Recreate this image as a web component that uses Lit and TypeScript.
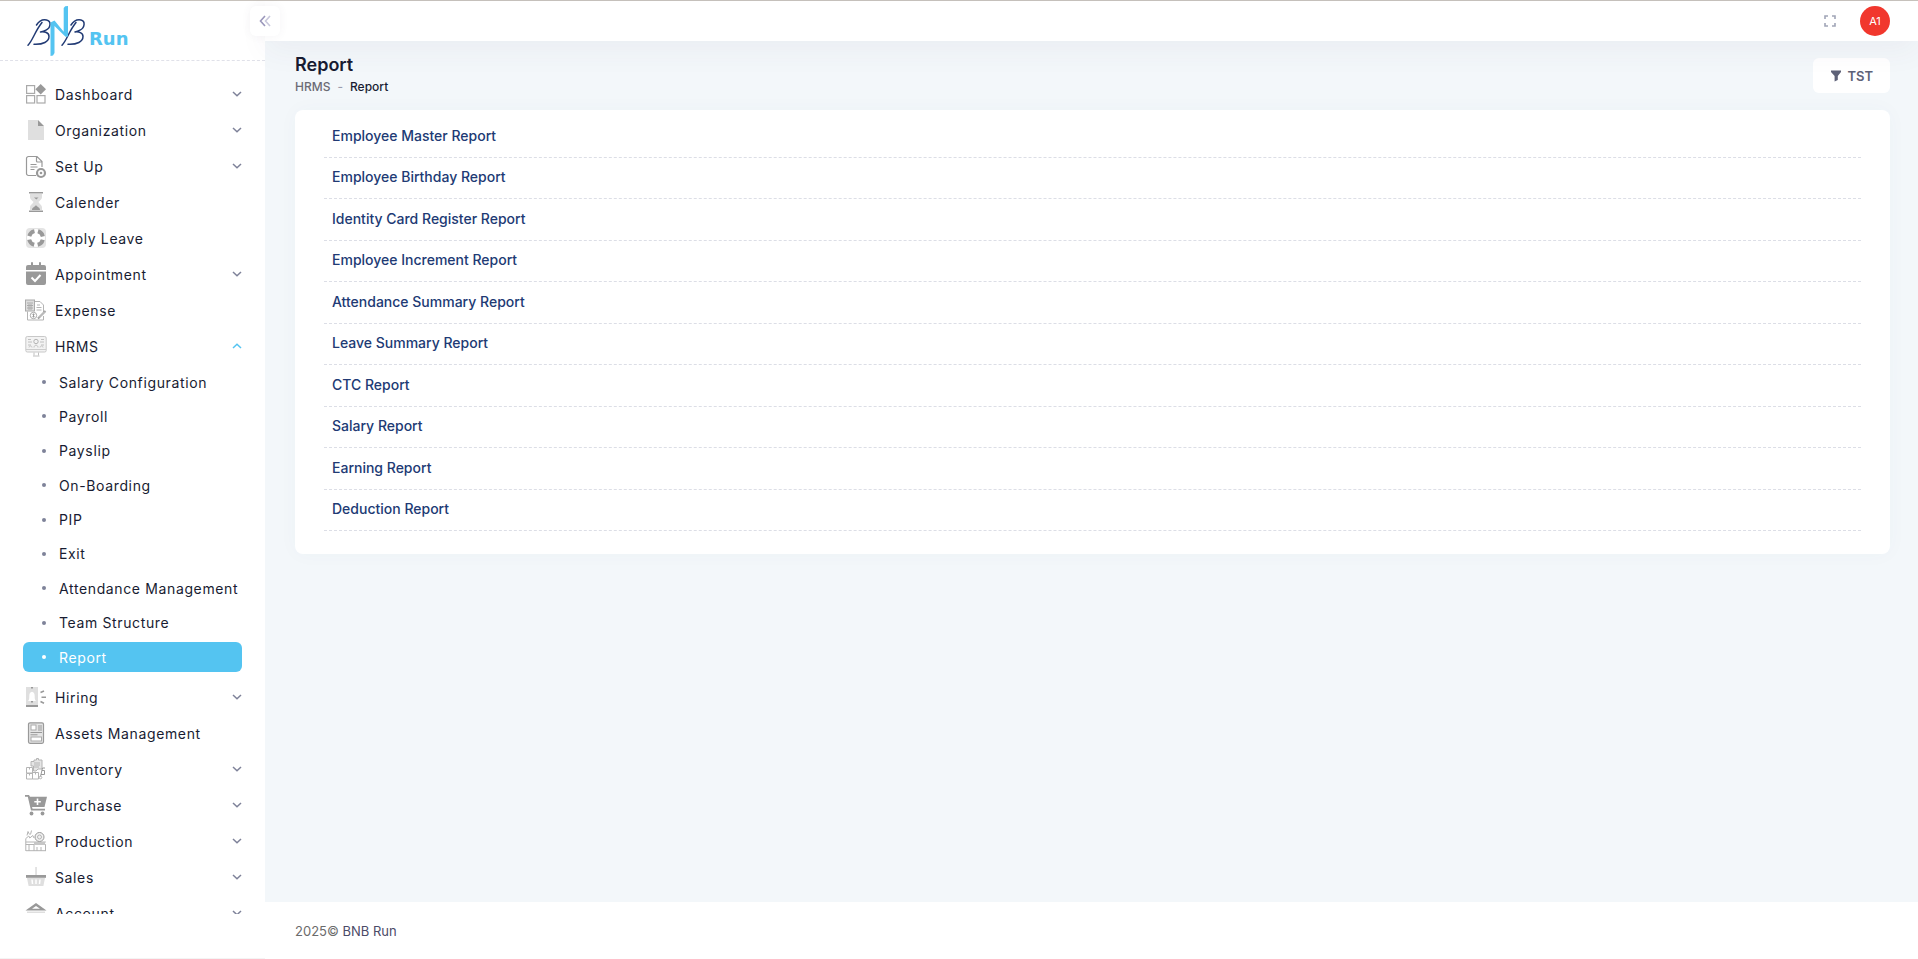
import { LitElement, html, css, svg, nothing, TemplateResult } from 'lit';
import { customElement, state } from 'lit/decorators.js';
import { classMap } from 'lit/directives/class-map.js';

interface MenuItem {
  label: string;
  icon: string;
  expandable?: boolean;
  children?: string[];
}

const MENU: MenuItem[] = [
  { label: 'Dashboard', icon: 'dashboard', expandable: true },
  { label: 'Organization', icon: 'file', expandable: true },
  { label: 'Set Up', icon: 'setup', expandable: true },
  { label: 'Calender', icon: 'hourglass' },
  { label: 'Apply Leave', icon: 'lifebuoy' },
  { label: 'Appointment', icon: 'calendar', expandable: true },
  { label: 'Expense', icon: 'expense' },
  {
    label: 'HRMS',
    icon: 'monitor',
    expandable: true,
    children: [
      'Salary Configuration',
      'Payroll',
      'Payslip',
      'On-Boarding',
      'PIP',
      'Exit',
      'Attendance Management',
      'Team Structure',
      'Report',
    ],
  },
  { label: 'Hiring', icon: 'hiring', expandable: true },
  { label: 'Assets Management', icon: 'assets' },
  { label: 'Inventory', icon: 'inventory', expandable: true },
  { label: 'Purchase', icon: 'cart', expandable: true },
  { label: 'Production', icon: 'factory', expandable: true },
  { label: 'Sales', icon: 'basket', expandable: true },
  { label: 'Account', icon: 'bank', expandable: true },
];

const REPORTS = [
  'Employee Master Report',
  'Employee Birthday Report',
  'Identity Card Register Report',
  'Employee Increment Report',
  'Attendance Summary Report',
  'Leave Summary Report',
  'CTC Report',
  'Salary Report',
  'Earning Report',
  'Deduction Report',
];

const D = '#999';
const L = '#dfdfdf';
const M = '#b4b4b4';

const ICONS: Record<string, TemplateResult> = {
  dashboard: svg`
    <g fill="none" stroke="#aaa" stroke-width="1.2"><rect x="1.6" y="2.6" width="8" height="7.8"/><rect x="1.6" y="12.6" width="8" height="7.4"/><rect x="12" y="12.6" width="8" height="7.4"/></g>
    <path fill=${D} d="M15.7 1l5.3 5.3-5.3 5.3-5.3-5.3z"/>`,
  file: svg`<path fill=${L} d="M3 1h10v6h6v14H3z"/><path fill=${D} d="M13 1l6 6h-6z"/>`,
  setup: svg`
    <path fill="none" stroke=${D} stroke-width="1.2" d="M11 20.5H3.5a2 2 0 0 1-2-2v-15a2 2 0 0 1 2-2h8.500l5 5V12M11.500 1.500V6a1 1 0 0 0 1 1H17M5.500 9.500h6M5.500 12h7M5.500 14.500h4"/>
    <circle cx="16" cy="18" r="4" fill="#fff" stroke=${D} stroke-width="2.200"/><circle cx="16" cy="18" r="1.300" fill=${D}/>`,
  hourglass: svg`
    <path fill=${L} d="M5 3h12v3c0 2.500-3 4-3.500 5 .500 1.500 3.500 3 3.500 5.500V19H5v-2.500C5 14 8 12.500 8.500 11 8 10 5 8.500 5 6z"/>
    <path fill=${D} d="M4 1h14v1.600H4zM4 19.400h14V21H4zM9 6.500h4.500l-2.200 2zM7 19c0-3 3-3 4-5 1 2 4 2 4 5z"/>`,
  lifebuoy: svg`
    <rect x="1" y="1" width="20" height="20" rx="4" fill="#e4e4e4"/><circle cx="11" cy="11" r="9" fill="#fff"/>
    <circle cx="11" cy="11" r="7" fill="none" stroke=${D} stroke-width="4" stroke-dasharray="7.400 3.596" stroke-dashoffset="-1.800"/>`,
  calendar: svg`
    <path fill=${D} d="M6 0a1 1 0 0 1 2 0v2h6V0a1 1 0 0 1 2 0v2h3a2 2 0 0 1 2 2v3H1V4a2 2 0 0 1 2-2h3zM1 8.500h20V20a2 2 0 0 1-2 2H3a2 2 0 0 1-2-2z"/>
    <path fill="none" stroke="#fff" stroke-width="2" d="M6.500 14.500l3.500 3.500 5.500-6"/>`,
  expense: svg`
    <path fill="none" stroke=${M} stroke-width="1" d="M10 2.500h5l3.500 3.500v7M2.500 12.500v8.500h16v-4M11.500 8.500h5M11.500 11h5M12 6h3"/>
    <rect x=".5" y="1" width="9" height="11" fill="#ddd" stroke="#aaa"/><path stroke="#aaa" d="M2 4h6M2 6.500h6M2 9h6M4 5v6M6 5v6"/>
    <circle cx="8.500" cy="16.500" r="3.200" fill="none" stroke="#aaa"/><path fill="none" stroke=${D} d="M8.500 14.500v4M7.500 15.500h2M7.500 17.500h2"/>
    <path stroke=${D} stroke-width="2" d="M13 19.500l7.500-7.500"/><path stroke="#eee" stroke-width=".8" d="M14 18.500l6-6"/>`,
  monitor: svg`
    <rect x=".8" y="1.500" width="20.400" height="15.500" rx="1.500" fill="#f3f3f3" stroke="#c8c8c8"/><path stroke="#ccc" d="M1 14.500h20"/>
    <path fill="none" stroke="#c0c0c0" d="M8 21h6.500M9 17.500v3M13.500 17.500v3M3 4.500h3M3 7h4M3 10h3M16 4.500h3M15 7h4M16 10h3M9 12.500c0-3 4-3 4 0"/>
    <circle cx="11" cy="6.500" r="2.200" fill="none" stroke="#b4b4b4"/><path fill="none" stroke="#c4c4c4" d="M4 12.500c0-2 3-2 3 0M15 12.500c0-2 3-2 3 0"/>`,
  hiring: svg`
    <path fill=${L} d="M1 1h12v20H1z"/><path fill=${D} d="M1 19h12v2H1zM6 1h2v1.500H6zM6 15h2v1.500H6z"/>
    <path fill="#fff" d="M3 15c1.300-1 1.300-3 1.300-5 0-2.500 1-4 2.700-4.300C8.700 6 9.700 7.500 9.700 10c0 2 0 4 1.300 5z"/>
    <path stroke=${D} stroke-width="1.600" d="M16.500 11.200H21M15.500 6.500l3.500-1.500M15.500 15.500l3.500 1.700"/>`,
  assets: svg`
    <rect x="3.500" y=".8" width="15" height="20.500" rx="1.500" fill="#e4e4e4" stroke=${D} stroke-width="1.200"/>
    <rect x="6" y="3" width="5" height="5" fill="#fff" stroke="#aaa"/><path stroke=${D} d="M13 4h4M13 6h4M13 8h4M5.500 10.500h11.500M5.500 12.800h7"/>
    <rect x="6" y="15" width="10.500" height="4" fill="#fff" stroke="#aaa"/>`,
  inventory: svg`
    <path fill="none" stroke=${M} d="M1.500 9.500h6v5.500h-6zM1.500 15.500h6v5.500h-6zM7.500 14.500h6v6.500h-6zM4.500 9.500v2M4.500 15.500v2M10.500 14.500v2"/>
    <path fill="#e6e6e6" stroke=${M} d="M6 3.500h3V2h2.500V.5h2V2H17v9h-4l-2 2H8.500V8H6z"/><path stroke=${M} d="M9 5h6M9 7h6M9 9h5"/>
    <path fill="none" stroke=${D} d="M20 10h-2.500l-2 8.500M17 12.500h2.500v4H16"/><circle cx="15.500" cy="19.500" r="1.300" fill="none" stroke=${M}/>`,
  cart: svg`
    <path fill=${D} d="M0 1h4l1 1.800h17L19.500 13H7l.6 1.800H20v1.700H6L2.800 2.700H0z"/><circle cx="6.500" cy="19.500" r="1.900" fill=${D}/><circle cx="17.500" cy="19.500" r="1.900" fill=${D}/>
    <path stroke="#fff" stroke-width="1.600" d="M12.500 4.500v6.500M9.300 7.800h6.500"/>`,
  factory: svg`
    <path fill="none" stroke=${M} d="M.8 21V8.500l3-2.500 1 2 3-2.500L9 8M2 5.500l1-4 1.500 3M5.500 4.500l1-4M.8 12h20M.8 14.500h20M1 20.700h20M4 15v6M9 15v6M12 17v4M16 17v4M20.500 15v6"/>
    <circle cx="14.500" cy="7" r="4.500" fill="#f1f1f1" stroke=${D}/><circle cx="14.500" cy="7" r="2" fill="none" stroke=${M}/><path fill="#c6c6c6" d="M9 12h11v3H9z"/>`,
  basket: svg`
    <path fill=${L} d="M10.200 1h1.700v8h-1.700zM2 12h18l-1.600 8H3.600z"/><path fill=${D} d="M1 9h20v2.800H1z"/>
    <path stroke="#fff" stroke-width="1.500" d="M7 13.500l.5 4.500M11 13.500V18M15 13.500l-.5 4.500"/>`,
  bank: svg`
    <path fill=${D} fill-rule="evenodd" d="M11 1l10.500 7.500H.5zM11 4L7 6.800h8z"/><path fill=${L} d="M2 9.500h18V11H2z"/><path fill=${D} d="M3 12h3v7H3zM9.500 12h3v7h-3zM16 12h3v7h-3zM1 20h20v2H1z"/>`,
};

@customElement('brand-logo')
export class BrandLogo extends LitElement {
  static styles = css`
    :host { display: block; }
    .logo { display: block; width: 104px; height: 52px; overflow: visible; }
    .name { font: 700 18px "DejaVu Sans", Arial, sans-serif; fill: #54c4f1; }
  `;

  render() {
    return html`
      <svg class="logo" viewBox="26 5 104 52" role="img" aria-label="BNB Run">
        <g fill="none" stroke="#213a74" stroke-width="1.500" stroke-linecap="round" stroke-linejoin="round">
          <path d="M28 45.200C33 40 35 31 42 22.500M36.500 25C39 21 43 19.300 46.500 20c5 1 4.500 7.500-.5 10.200-2 1.200-4 1.600-5.500 1.800 4-.5 8.500.5 8.500 4.500 0 5-6 8.300-15 7.800"/>
          <path d="M62 45.200c5-5.200 7-14.200 14-22.700M71 25c2.500-4 6.500-5.700 10-5 4.500 1 4 7.500-1 10.200-2 1.200-3.500 1.600-5 1.800 3.500-.5 8 .5 8 4.500 0 5-6 8.300-15 7.800"/>
        </g>
        <path fill="#54c4f1" d="M50.500 22.500l4-2 9.200 11.200V8l1.500-1.700 2.800-.3v30.500l-2.500.3L54.500 26v27l-1.500 2.500-2.500.5z"/>
        <text class="name" x="89" y="45">Run</text>
      </svg>
    `;
  }
}

@customElement('side-menu')
export class SideMenu extends LitElement {
  @state() private open = 'HRMS';

  static styles = css`
    :host { display: flex; flex-direction: column; min-height: 0; }
    .nav {
      flex: 1;
      min-height: 0;
      overflow-y: auto;
      scrollbar-width: none;
      padding: 0 23px 0 24px;
    }
    ul { list-style: none; margin: 0; padding: 0; }
    .row {
      display: flex;
      align-items: center;
      gap: 8px;
      width: 100%;
      height: 36px;
      padding: 0;
      border: 0;
      background: none;
      box-sizing: border-box;
      color: #181c32;
      font: inherit;
      letter-spacing: inherit;
      text-align: left;
      text-decoration: none;
      cursor: pointer;
    }
    .icon { flex: none; width: 22px; height: 22px; margin-left: 1px; overflow: visible; }
    .label { flex: 1; white-space: nowrap; }
    .chevron { flex: none; width: 10px; height: 10px; color: #7e8299; }
    .chevron.up { color: #54c4f1; transform: rotate(180deg); }
    .sub {
      display: flex;
      flex-direction: column;
      justify-content: space-between;
      min-height: 305px;
      margin: 3px 0 7px -1px;
    }
    .link {
      display: flex;
      align-items: center;
      gap: 13px;
      height: 30px;
      padding-left: 19px;
      border-radius: 6px;
      color: #181c32;
      text-decoration: none;
      white-space: nowrap;
    }
    .link::before {
      content: '';
      flex: none;
      width: 4px;
      height: 4px;
      border-radius: 50%;
      background: #7e8299;
    }
    .link.active { background: #54c4f1; color: #fff; }
    .link.active::before { background: #fff; }
  `;

  private toggle(label: string) {
    this.open = this.open === label ? '' : label;
  }

  private renderItem(item: MenuItem) {
    const open = item.label === this.open;
    const icon = html`<svg class="icon" viewBox="0 0 22 22" aria-hidden="true">${ICONS[item.icon]}</svg>
      <span class="label">${item.label}</span>`;
    return html`
      <li>
        ${item.expandable
          ? html`<button class="row" type="button" aria-expanded=${open} @click=${() => this.toggle(item.label)}>
              ${icon}
              <svg class=${classMap({ chevron: true, up: open })} viewBox="0 0 10 10" aria-hidden="true">
                <path fill="none" stroke="currentColor" stroke-width="1.500" d="M1 3l4 3.800L9 3" />
              </svg>
            </button>`
          : html`<a class="row" href="#">${icon}</a>`}
        ${open && item.children
          ? html`<ul class="sub">
              ${item.children.map(
                (c) => html`<li><a class=${classMap({ link: true, active: c === 'Report' })} href="#">${c}</a></li>`
              )}
            </ul>`
          : nothing}
      </li>
    `;
  }

  render() {
    return html`<nav class="nav" aria-label="Main"><ul>${MENU.map((m) => this.renderItem(m))}</ul></nav>`;
  }
}

@customElement('app-root')
export class AppRoot extends LitElement {
  static styles = css`
    :host {
      display: block;
      font-family: Inter, "Open Sans", sans-serif;
      font-size: 14px;
      color: #181c32;
    }
    .page {
      display: grid;
      grid-template-columns: 265px minmax(0, 1fr);
      height: 100vh;
      box-sizing: border-box;
      border-top: 1px solid #c8c3bd;
      background: #f3f7fa;
    }
    .side {
      display: flex;
      flex-direction: column;
      min-height: 0;
      background: #fff;
      border-bottom: 1px solid #f4f4f4;
    }
    .brand {
      padding: 4px 26px 3px;
      border-bottom: 1px dashed #e0e1e9;
      margin-bottom: 15px;
    }
    .menu { flex: 1; margin-bottom: 44px; letter-spacing: 0.045em; }
    .main { display: flex; flex-direction: column; min-width: 0; min-height: 0; }
    .top {
      position: relative;
      z-index: 1;
      display: flex;
      align-items: center;
      height: 40px;
      padding-right: 28px;
      background: #fff;
      box-shadow: 0 10px 30px rgba(82, 63, 105, 0.05);
    }
    .collapse {
      display: grid;
      place-items: center;
      width: 30px;
      height: 30px;
      margin: 0 auto 0 -15px;
      padding: 0;
      border: 0;
      border-radius: 6px;
      background: #fff;
      box-shadow: 0 0 10px rgba(82, 63, 105, 0.06);
    }
    .full { display: grid; place-items: center; width: 30px; height: 30px; margin-right: 15px; padding: 0; border: 0; background: none; }
    .glyph { width: 12px; height: 12px; }
    .avatar {
      width: 30px;
      height: 30px;
      padding: 0;
      border: 0;
      border-radius: 50%;
      background: #f1372d;
      color: #fff;
      font: 400 11px Inter, sans-serif;
    }
    .content { flex: 1; min-height: 0; overflow: auto; padding: 0 28px 0 30px; }
    .heading { display: flex; align-items: center; justify-content: space-between; height: 69px; }
    .title { padding-bottom: 2px; }
    h1 { margin: 0; font-size: 18px; line-height: 24px; font-weight: 600; }
    .crumbs { display: flex; gap: 7px; font-size: 12px; line-height: 20px; font-weight: 500; }
    .crumbs a { color: #6b6b74; text-decoration: none; }
    .dash { color: #9a9cae; }
    .filter {
      display: flex;
      align-items: center;
      gap: 5px;
      height: 35px;
      padding: 0 17px;
      border: 0;
      border-radius: 6px;
      background: #fff;
      color: #5e6278;
      font: 600 13px Inter, sans-serif;
    }
    .funnel { width: 12px; height: 12px; }
    .card {
      padding: 6px 29px 23px;
      border-radius: 8px;
      background: #fff;
      box-shadow: 0 0 20px rgba(76, 87, 125, 0.03);
    }
    .reports { display: grid; grid-auto-rows: 1fr; min-height: 415px; margin: 0; padding: 0; list-style: none; }
    .report { display: flex; align-items: center; padding: 0 8px 2px; border-bottom: 1px dashed #dcdee6; }
    .report a { color: #213a74; font-weight: 500; text-decoration: none; }
    .foot { padding: 19px 30px 18px; background: #fff; font-size: 13px; line-height: 20px; color: #6b6b6b; }
    .foot a { color: #4b4b68; text-decoration: none; }
  `;

  render() {
    return html`
      <div class="page">
        <aside class="side">
          <div class="brand"><brand-logo></brand-logo></div>
          <side-menu class="menu"></side-menu>
        </aside>
        <div class="main">
          <header class="top">
            <button class="collapse" type="button" aria-label="Collapse menu">
              <svg class="glyph" viewBox="0 0 12 12" fill="none" stroke-width="1.600">
                <path stroke="#9a97bb" d="M6 1L1.500 6 6 11" /><path stroke="#c9c8dc" d="M11 1L6.500 6l4.500 5" />
              </svg>
            </button>
            <button class="full" type="button" aria-label="Full screen">
              <svg class="glyph" viewBox="0 0 12 12" fill="none" stroke="#a1a5b7" stroke-width="1.600">
                <path d="M1 4V1h3M8 1h3v3M11 8v3H8M4 11H1V8" />
              </svg>
            </button>
            <button class="avatar" type="button" aria-label="Account A1">A1</button>
          </header>
          <main class="content">
            <div class="heading">
              <div class="title">
                <h1>Report</h1>
                <nav class="crumbs" aria-label="Breadcrumb"><a href="#">HRMS</a><span class="dash">-</span><span>Report</span></nav>
              </div>
              <button class="filter" type="button">
                <svg class="funnel" viewBox="0 0 12 12" aria-hidden="true">
                  <path fill="currentColor" d="M1 .5h10v1.600L7.800 6v4L4.600 11.500V6L1 2.100z" />
                </svg>
                TST
              </button>
            </div>
            <section class="card">
              <ul class="reports">
                ${REPORTS.map((r) => html`<li class="report"><a href="#">${r}</a></li>`)}
              </ul>
            </section>
          </main>
          <footer class="foot">2025© <a href="#">BNB Run</a></footer>
        </div>
      </div>
    `;
  }
}
